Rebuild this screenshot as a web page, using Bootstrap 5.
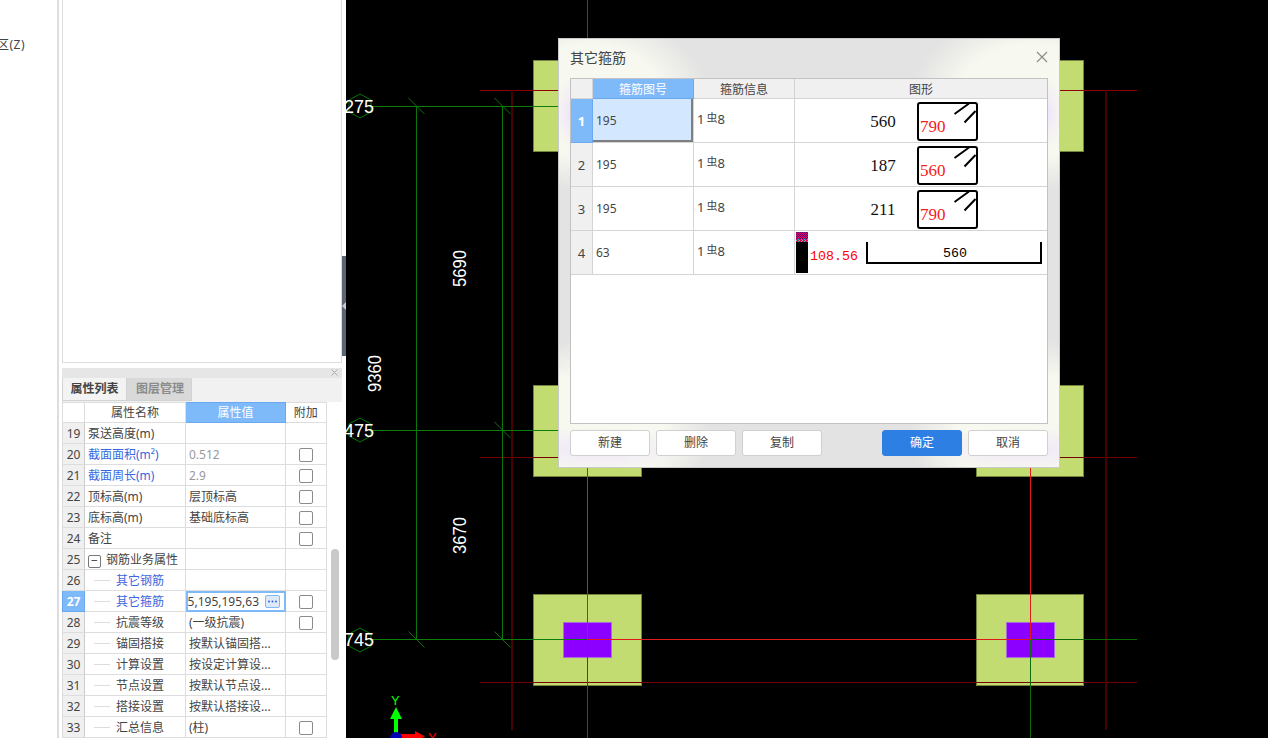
<!DOCTYPE html>
<html lang="zh-CN">
<head>
    <meta charset="UTF-8">
    <meta name="viewport" content="width=device-width, initial-scale=1.0">
    <title>其它箍筋</title>
    <link href="https://cdn.jsdelivr.net/npm/bootstrap@5.3.1/dist/css/bootstrap.min.css" rel="stylesheet">
    <style>
        html, body { height: 100%; }
        body { font-family: "Noto Sans", "Noto Sans CJK SC", sans-serif; font-size: 12px; color: #444; background: #fff; overflow: hidden; }
        .side-strip { width: 57px; padding-top: 36px; flex: none; }
        .side-strip span { margin-left: -3px; display: block; white-space: nowrap; line-height: 17px; letter-spacing: .5px; }
        .panel-col { width: 285px; flex: none; border-left: 2px solid #ddd; padding-left: 3px; }
        .view-box { height: 363px; border: 1px solid #ddd; border-top: 0; background: #fff; margin-bottom: 5px; }
        .prop-bar { height: 10px; background: #e6e6e6; padding-right: 4px; line-height: 0; }
        .prop-tabs { height: 24px; background: #f1f1f1; }
        .prop-tab { width: 65px; height: 23px; line-height: 22px; text-align: center; font-weight: 700; border: 1px solid #d2d2d2; border-top: 0; color: #444; background: #f3f3f3; }
        .prop-tab + .prop-tab { background: #d9d9d9; color: #8b8b8b; border-left: 0; padding-left: 2px; }
        .prop-body { width: 280px; }
        .prop-grid { width: 263.5px; table-layout: fixed; border-collapse: collapse; margin: 0; flex: none; }
        .prop-grid th, .prop-grid td { border: 1px solid #ddd; height: 21px; padding: 0 3px; font-weight: 400; white-space: nowrap; overflow: hidden; vertical-align: middle; line-height: 19px; }
        .prop-grid th { text-align: center; height: 20.5px; background: #fff; }
        .prop-grid .row-no { background: #f0f0f0; text-align: center; padding: 0; border-right-color: #ccc; }
        .prop-grid .hot { background: #7eb9f9; color: #fff; border-color: #6aa8ef; }
        .prop-grid .row-no.hot { font-weight: 700; }
        .prop-grid .muted-val { color: #999; }
        .prop-grid .blue-txt { color: #3a67e0; }
        .prop-grid .chk-cell { text-align: center; padding: 0; }
        .prop-grid .form-check-input { width: 14px; height: 14px; margin: 2px auto 0; border: 1px solid #8a8a8a; border-radius: 2px; display: block; }
        .tree-row { padding-left: 31px !important; position: relative; }
        .tree-row::before { content: ""; position: absolute; left: 9px; top: 10px; width: 16px; border-top: 1px solid #ddd; }
        .fold-box { display: inline-block; width: 13px; height: 13px; border: 1px solid #777; border-radius: 2px; line-height: 10px; text-align: center; margin-right: 5px; vertical-align: -1px; }
        .edit-cell { padding: 0 !important; outline: 2px solid #7eb9f9; outline-offset: -2px; }
        .edit-wrap { height: 19px; padding: 0 5px 0 3px; overflow: hidden; }
        .edit-wrap span { white-space: nowrap; }
        .more-btn { flex: none; width: 15px; height: 13px; margin-left: 6px; border: 1px solid #7eb9f9; border-radius: 2px; background: #dce9f9; line-height: 0; }
        .scroll-track { width: 16.5px; flex: none; position: relative; }
        .scroll-thumb { position: absolute; left: 4px; top: 147px; width: 8px; height: 111px; background: #c9c9c9; border-radius: 4px; }
        .splitter { width: 4px; flex: none; position: relative; }
        .splitter-grip { position: absolute; left: 0; top: 256px; width: 4px; height: 100px; background: #5b6672; }
        .splitter-grip::after { content: ""; position: absolute; left: 0; top: 46px; border: 4px solid transparent; border-left: 0; border-right-color: #c5ccd4; }
        .cad-view { background: #000; min-width: 0; position: relative; }
        .cad-view svg { display: block; }
        .cad-view text { font-family: "Liberation Sans", sans-serif; }
        .win-box {
            position: absolute; left: 212px; top: 38px; width: 502px; height: 430px; border: 1px solid #c9c9c9; padding: 0 11px 11px 11px;
            background:
                radial-gradient(ellipse 14px 34px at 11px 74px, #efe5fa, transparent),
                radial-gradient(ellipse 14px 34px at 489px 74px, #efe5fa, transparent),
                radial-gradient(ellipse 150px 36px at 40px 410px, #efe5fa, transparent 60%),
                radial-gradient(ellipse 150px 36px at 462px 410px, #efe5fa, transparent 60%),
                radial-gradient(ellipse 120px 90px at 30px 62px, #f7f8ef 62%, transparent),
                radial-gradient(ellipse 120px 90px at 472px 62px, #f7f8ef 62%, transparent),
                radial-gradient(ellipse 120px 95px at 30px 395px, #f7f8ef 62%, transparent),
                radial-gradient(ellipse 120px 95px at 472px 395px, #f7f8ef 62%, transparent),
                #e3e3e3;
        }
        .win-title { height: 39px; font-size: 14px; color: #444; padding-top: 7px; line-height: 23px; }
        .win-title svg { margin-top: 5px; }
        .win-grid-wrap { height: 346px; background: #fff; border: 1px solid #c2c2c2; }
        .rebar-grid { width: 476px; table-layout: fixed; border-collapse: collapse; margin: 0; }
        .rebar-grid th, .rebar-grid td { border: 1px solid #d4d4d4; padding: 0 3px; font-weight: 400; vertical-align: middle; background: #fff; }
        .rebar-grid tr > :first-child { border-left: 0; }
        .rebar-grid tr > :last-child { border-right: 0; }
        .rebar-grid thead th { height: 19px; background: #f0f0f0; text-align: center; line-height: 17px; padding-top: 2px; border-top: 0; }
        .rebar-grid tbody td { height: 44px; padding-top: 1px; }
        .rebar-grid .row-no { background: #f0f0f0; text-align: center; font-size: 13px; padding: 2px 0 0; }
        .rebar-grid .hot { background: #7eb9f9; color: #fff; border-color: #6aa8ef; }
        .rebar-grid .row-no.hot { font-weight: 700; }
        .rebar-grid .sel-cell { background: #d3e8fe; box-shadow: inset -2px -2px 0 #7f7f7f; }
        .rebar-grid .fig-cell { padding: 0; }
        .rebar-grid svg { display: block; }
        .rebar-grid .fig-num { font-family: "Liberation Serif", serif; font-size: 17px; fill: #111; }
        .rebar-grid .fig-red { font-family: "Liberation Serif", serif; font-size: 17px; fill: #f32020; }
        .rebar-grid .fig-mono { font-family: "Liberation Mono", monospace; font-size: 13.300px; }
        .grade-txt { position: relative; top: -1px; font-size: 13px; }
        .grade-txt i { font-style: normal; font-size: 11px; position: relative; top: -2px; margin: 0 0 0 2px; }
        .win-btn { width: 80px; height: 26px; padding: 0; font-size: 12px; line-height: 24px; color: #444; background: #fff; border: 1px solid #d0d0d0; border-radius: 3px; }
        .win-btn + .win-btn { margin-left: 6px; }
        .win-btn.ok-btn { background: #2d7fe3; border-color: #2d7fe3; color: #fff; margin-left: auto; }
    </style>
</head>
<body class="d-flex">
    <div class="side-strip"><span>区(Z)</span></div>

    <div class="panel-col d-flex flex-column">
        <div class="view-box"></div>
        <div class="prop-bar d-flex justify-content-end align-items-center">
            <svg width="7" height="7" viewBox="0 0 7 7"><path d="M0.5 0.5 6.500 6.500M6.500 0.5 0.5 6.500" stroke="#aaa" fill="none"/></svg>
        </div>
        <div class="prop-tabs d-flex">
            <div class="prop-tab">属性列表</div>
            <div class="prop-tab">图层管理</div>
        </div>
        <div class="prop-body d-flex flex-fill overflow-hidden">
            <table class="prop-grid">
                <colgroup><col style="width:22px"><col style="width:101px"><col style="width:100px"><col style="width:40.500px"></colgroup>
                <thead>
                    <tr><th></th><th>属性名称</th><th class="hot">属性值</th><th>附加</th></tr>
                </thead>
                <tbody>
                    <tr><td class="row-no">19</td><td>泵送高度(m)</td><td></td><td></td></tr>
                    <tr><td class="row-no">20</td><td class="blue-txt">截面面积(m²)</td><td class="muted-val">0.512</td><td class="chk-cell"><input class="form-check-input" type="checkbox"></td></tr>
                    <tr><td class="row-no">21</td><td class="blue-txt">截面周长(m)</td><td class="muted-val">2.9</td><td class="chk-cell"><input class="form-check-input" type="checkbox"></td></tr>
                    <tr><td class="row-no">22</td><td>顶标高(m)</td><td>层顶标高</td><td class="chk-cell"><input class="form-check-input" type="checkbox"></td></tr>
                    <tr><td class="row-no">23</td><td>底标高(m)</td><td>基础底标高</td><td class="chk-cell"><input class="form-check-input" type="checkbox"></td></tr>
                    <tr><td class="row-no">24</td><td>备注</td><td></td><td class="chk-cell"><input class="form-check-input" type="checkbox"></td></tr>
                    <tr><td class="row-no">25</td><td><span class="fold-box">−</span>钢筋业务属性</td><td></td><td></td></tr>
                    <tr><td class="row-no">26</td><td class="tree-row blue-txt">其它钢筋</td><td></td><td></td></tr>
                    <tr><td class="row-no hot">27</td><td class="tree-row blue-txt">其它箍筋</td><td class="edit-cell"><div class="edit-wrap d-flex justify-content-end align-items-center"><span>195,195,195,63</span><div class="more-btn"><svg width="13" height="11" viewBox="0 0 13 11"><g fill="#3a67e0"><circle cx="3" cy="5.500" r="1"/><circle cx="6.500" cy="5.500" r="1"/><circle cx="10" cy="5.500" r="1"/></g></svg></div></div></td><td class="chk-cell"><input class="form-check-input" type="checkbox"></td></tr>
                    <tr><td class="row-no">28</td><td class="tree-row">抗震等级</td><td>(一级抗震)</td><td class="chk-cell"><input class="form-check-input" type="checkbox"></td></tr>
                    <tr><td class="row-no">29</td><td class="tree-row">锚固搭接</td><td>按默认锚固搭...</td><td></td></tr>
                    <tr><td class="row-no">30</td><td class="tree-row">计算设置</td><td>按设定计算设...</td><td></td></tr>
                    <tr><td class="row-no">31</td><td class="tree-row">节点设置</td><td>按默认节点设...</td><td></td></tr>
                    <tr><td class="row-no">32</td><td class="tree-row">搭接设置</td><td>按默认搭接设...</td><td></td></tr>
                    <tr><td class="row-no">33</td><td class="tree-row">汇总信息</td><td>(柱)</td><td class="chk-cell"><input class="form-check-input" type="checkbox"></td></tr>
                </tbody>
            </table>
            <div class="scroll-track"><div class="scroll-thumb"></div></div>
        </div>
    </div>

    <div class="splitter"><div class="splitter-grip"></div></div>

    <div class="cad-view flex-fill">
        <svg width="922" height="738" viewBox="346 0 922 738" shape-rendering="crispEdges">
            <!-- 柱子 -->
            <g fill="#c3dc72" stroke="#76843f">
                <rect x="533.500" y="60.500" width="108" height="91"/>
                <rect x="976.500" y="60.500" width="107" height="91"/>
                <rect x="533.500" y="385.500" width="108" height="91"/>
                <rect x="976.500" y="385.500" width="107" height="91"/>
                <rect x="533.500" y="594.500" width="108" height="91"/>
                <rect x="976.500" y="594.500" width="107" height="91"/>
            </g>
            <g fill="#8c00ff" stroke="#a86bd8">
                <rect x="563.500" y="622.500" width="48" height="35"/>
                <rect x="1006.500" y="622.500" width="48" height="35"/>
            </g>
            <!-- 红色轴网 -->
            <g fill="none">
                <path d="M480 90.500H1137" stroke="#8f0000"/>
                <path d="M480 457.500H1137M480 682.500H1137" stroke="#740000"/>
                <path d="M512 90V730M1106 90V730" stroke="#4a0000" stroke-width="2"/>
            </g>
            <!-- 绿色轴网与标注 -->
            <g fill="none">
                <path d="M372 106.500H560M372 430.500H560M372 639.500H587" stroke="#0a7d0a"/>
                <path d="M1031 639.500H1137" stroke="#0a6a0a"/>
                <path d="M416.500 106V640M502.500 106V640" stroke="#0a750a"/>
                <path d="M587.500 0V40M587.500 640V738M1030.500 640V738" stroke="#0b6d0b"/>
            </g>
            <rect x="587" y="460" width="1" height="180" fill="#e01a1a"/>
            <rect x="1030" y="460" width="1" height="180" fill="#e01a1a"/>
            <rect x="587" y="639" width="444" height="1" fill="#e01a1a"/>
            <g fill="none" stroke="#0a750a" shape-rendering="auto">
                <path d="M408.500 98 424.500 114M494.500 98 510.500 114M494.500 422 510.500 438M408.500 631.500 424.500 647.500M494.500 631.500 510.500 647.500"/>
                <path d="M360 94 371 100V112L360 118 349 112V100Z"/>
                <path d="M360 418 371 424V436L360 442 349 436V424Z"/>
                <path d="M360 628 371 634V646L360 652 349 646V634Z"/>
            </g>
            <g fill="#fff" font-size="18" shape-rendering="auto">
                <text x="374" y="113" text-anchor="end">275</text>
                <text x="374" y="437" text-anchor="end">475</text>
                <text x="374" y="646" text-anchor="end">745</text>
                <text transform="translate(466 287) rotate(-90)" textLength="37" lengthAdjust="spacingAndGlyphs">5690</text>
                <text transform="translate(381 392) rotate(-90)" textLength="37" lengthAdjust="spacingAndGlyphs">9360</text>
                <text transform="translate(466 554) rotate(-90)" textLength="37" lengthAdjust="spacingAndGlyphs">3670</text>
            </g>
            <!-- 坐标轴 -->
            <g shape-rendering="auto">
                <path d="M394 718H398V733H394Z" fill="#0f0"/>
                <path d="M396 707 402 719H390Z" fill="#0f0"/>
                <path d="M401 734H415V731L425 736.500 415 742V739H401Z" fill="#f00"/>
                <circle cx="396" cy="738" r="6" fill="#0000b0"/>
                <text x="391" y="705" font-size="13" fill="#0f0">Y</text>
                <text x="428" y="742" font-size="13" fill="#f00">Y</text>
            </g>
        </svg>

        <div class="win-box d-flex flex-column">
            <div class="win-title d-flex justify-content-between">
                <span>其它箍筋</span>
                <svg width="12" height="12" viewBox="0 0 12 12"><path d="M1 1 11 11M11 1 1 11" stroke="#8a8a8a" fill="none" stroke-width="1.100"/></svg>
            </div>
            <div class="win-grid-wrap">
                <table class="rebar-grid">
                    <colgroup><col style="width:21.500px"><col style="width:101px"><col style="width:101px"><col style="width:252.500px"></colgroup>
                    <thead>
                        <tr><th></th><th class="hot">箍筋图号</th><th>箍筋信息</th><th>图形</th></tr>
                    </thead>
                    <tbody>
                        <tr>
                            <td class="row-no hot">1</td><td class="sel-cell">195</td><td><span class="grade-txt">1<i>虫</i>8</span></td>
                            <td class="fig-cell">
                                <svg width="252" height="43" viewBox="0 0 252 43">
                                    <text class="fig-num" x="88" y="28" text-anchor="middle">560</text>
                                    <rect x="123" y="4" width="59" height="37" rx="2" fill="none" stroke="#000" stroke-width="2"/>
                                    <path d="M159.500 15 174 4.500M169.500 23.500 180.500 12" fill="none" stroke="#000" stroke-width="2"/>
                                    <text class="fig-red" x="125" y="33">790</text>
                                </svg>
                            </td>
                        </tr>
                        <tr>
                            <td class="row-no">2</td><td>195</td><td><span class="grade-txt">1<i>虫</i>8</span></td>
                            <td class="fig-cell">
                                <svg width="252" height="43" viewBox="0 0 252 43">
                                    <text class="fig-num" x="88" y="28" text-anchor="middle">187</text>
                                    <rect x="123" y="4" width="59" height="37" rx="2" fill="none" stroke="#000" stroke-width="2"/>
                                    <path d="M159.500 15 174 4.500M169.500 23.500 180.500 12" fill="none" stroke="#000" stroke-width="2"/>
                                    <text class="fig-red" x="125" y="33">560</text>
                                </svg>
                            </td>
                        </tr>
                        <tr>
                            <td class="row-no">3</td><td>195</td><td><span class="grade-txt">1<i>虫</i>8</span></td>
                            <td class="fig-cell">
                                <svg width="252" height="43" viewBox="0 0 252 43">
                                    <text class="fig-num" x="88" y="28" text-anchor="middle">211</text>
                                    <rect x="123" y="4" width="59" height="37" rx="2" fill="none" stroke="#000" stroke-width="2"/>
                                    <path d="M159.500 15 174 4.500M169.500 23.500 180.500 12" fill="none" stroke="#000" stroke-width="2"/>
                                    <text class="fig-red" x="125" y="33">790</text>
                                </svg>
                            </td>
                        </tr>
                        <tr>
                            <td class="row-no">4</td><td>63</td><td><span class="grade-txt">1<i>虫</i>8</span></td>
                            <td class="fig-cell">
                                <svg width="252" height="43" viewBox="0 0 252 43">
                                    <defs>
                                        <pattern id="chk" width="2" height="2" patternUnits="userSpaceOnUse">
                                            <rect width="2" height="2" fill="#e4006a"/>
                                            <rect width="1" height="1" fill="#2a0a90"/>
                                            <rect x="1" y="1" width="1" height="1" fill="#6a0a70"/>
                                        </pattern>
                                        <pattern id="chk2" width="3" height="2" patternUnits="userSpaceOnUse">
                                            <rect width="3" height="2" fill="#e4006a"/>
                                            <rect width="1" height="1" fill="#27c9c0"/>
                                            <rect x="1" y="1" width="1" height="1" fill="#6fd04a"/>
                                        </pattern>
                                    </defs>
                                    <rect x="1" y="1" width="12" height="41" fill="#000"/>
                                    <rect x="1" y="1" width="12" height="7" fill="url(#chk)"/>
                                    <rect x="1" y="8" width="12" height="3" fill="url(#chk2)"/>
                                    <text class="fig-mono" x="15" y="29" fill="#f00">108.56</text>
                                    <path d="M72 11V32H246V11" fill="none" stroke="#000" stroke-width="2"/>
                                    <text class="fig-mono" x="160" y="26" text-anchor="middle" fill="#000">560</text>
                                </svg>
                            </td>
                        </tr>
                    </tbody>
                </table>
            </div>
            <div class="d-flex mt-auto">
                <button class="btn win-btn" type="button">新建</button>
                <button class="btn win-btn" type="button">删除</button>
                <button class="btn win-btn" type="button">复制</button>
                <button class="btn win-btn ok-btn" type="button">确定</button>
                <button class="btn win-btn" type="button">取消</button>
            </div>
        </div>
    </div>

    <script src="https://cdn.jsdelivr.net/npm/bootstrap@5.3.1/dist/js/bootstrap.bundle.min.js"></script>
</body>
</html>
